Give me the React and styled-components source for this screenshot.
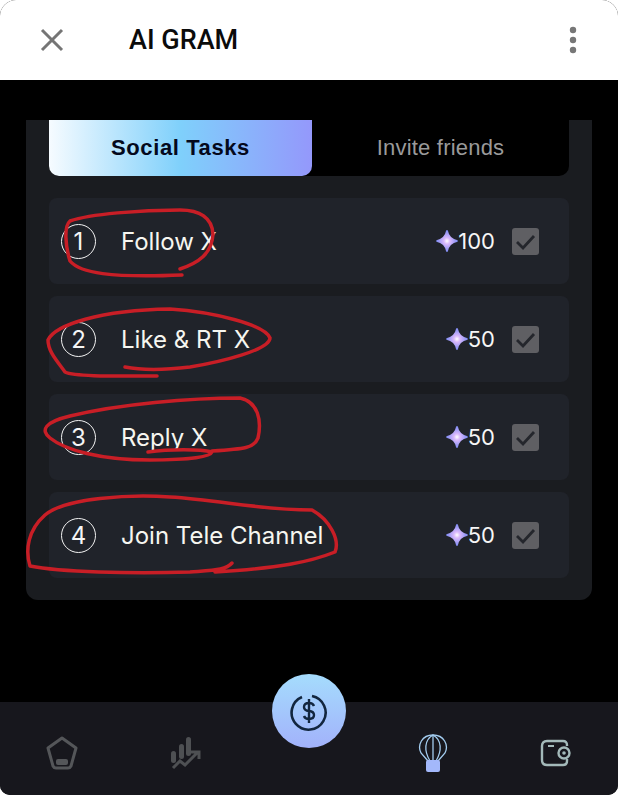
import React from 'react'
import styled, { createGlobalStyle } from 'styled-components'

const Global = createGlobalStyle`
  html, body { margin: 0; padding: 0; background: #ffffff; }
  * { box-sizing: border-box; }
`

const Shell = styled.div`
  position: relative;
  width: 618px;
  height: 795px;
  display: flex;
  flex-direction: column;
  background: #000;
  border-radius: 16px 16px 10px 10px;
  overflow: hidden;
  font-family: Inter, "Liberation Sans", sans-serif;
`

const TopBar = styled.header`
  height: 80px;
  flex: none;
  display: flex;
  align-items: center;
  padding: 0 40px;
  background: #fff;
`

const BarIcon = styled.svg`
  display: block;
  flex: none;
`

const Title = styled.h1`
  margin: 0 0 0 65px;
  flex: 1;
  font: 500 27px Roboto, "Liberation Sans", sans-serif;
  color: #0b0b0b;
`

const Body = styled.main`
  flex: 1;
  padding: 40px 26px 0 26px;
`

const Panel = styled.section`
  height: 480px;
  padding: 0 23px;
  background: #1a1c20;
  border-radius: 0 0 12px 12px;
`

const Tabs = styled.div`
  height: 56px;
  display: grid;
  grid-template-columns: 263px 1fr;
  background: #000;
  border-radius: 0 0 10px 10px;
  margin-bottom: 22px;
`

const Tab = styled.div`
  display: flex;
  align-items: center;
  justify-content: center;
  font: ${p => (p.$active ? 700 : 400)} 22px "Liberation Sans", sans-serif;
  letter-spacing: ${p => (p.$active ? '0.6px' : '0.2px')};
  color: ${p => (p.$active ? '#04091c' : '#9a9a9a')};
  border-radius: 0 0 10px 10px;
  background: ${p => (p.$active ? 'linear-gradient(90deg, #f6fbff 0%, #7fd0fb 50%, #9498fb 100%)' : 'transparent')};
`

const TaskList = styled.ul`
  list-style: none;
  margin: 0;
  padding: 0;
  display: flex;
  flex-direction: column;
  gap: 12px;
`

const Row = styled.li`
  height: 86px;
  display: flex;
  align-items: center;
  padding: 0 30px 0 12px;
  background: #20232a;
  border-radius: 8px;
`

const Num = styled.span`
  width: 35px;
  height: 35px;
  flex: none;
  display: flex;
  align-items: center;
  justify-content: center;
  border: 1px solid #f2f2f2;
  border-radius: 50%;
  color: #f5f5f5;
  font-size: 24px;
`

const Label = styled.span`
  flex: 1;
  margin-left: 25px;
  color: #f6f6f0;
  font-size: 24px;
`

const Points = styled.span`
  display: flex;
  align-items: center;
  color: #f6f6f6;
  font-size: 22px;
  margin-right: 17px;
`

const Check = styled.span`
  width: 27px;
  height: 27px;
  display: flex;
  align-items: center;
  justify-content: center;
  background: #5f5f63;
  border-radius: 3px;
`

const Nav = styled.nav`
  position: relative;
  height: 93px;
  flex: none;
  display: grid;
  grid-template-columns: repeat(5, 1fr);
  align-items: center;
  justify-items: center;
  padding: 8px 0 0 0;
  background: #17171d;
`

const CoinButton = styled.div`
  position: absolute;
  left: 272px;
  top: -28px;
  width: 74px;
  height: 74px;
  display: flex;
  align-items: center;
  justify-content: center;
  border-radius: 50%;
  background: linear-gradient(180deg, #a5dcfd 0%, #a2b2fb 100%);
`

const Scribbles = styled.svg`
  position: absolute;
  left: 0;
  top: 0;
  width: 618px;
  height: 795px;
  pointer-events: none;
`

const tasks = [
  { n: 1, label: 'Follow X', pts: 100 },
  { n: 2, label: 'Like & RT X', pts: 50 },
  { n: 3, label: 'Reply X', pts: 50 },
  { n: 4, label: 'Join Tele Channel', pts: 50 },
]

const Star = () => (
  <BarIcon width="22" height="22" viewBox="0 0 22 22">
    <defs>
      <radialGradient id="st" cx="50%" cy="50%" r="50%">
        <stop offset="0" stopColor="#fff" />
        <stop offset="0.3" stopColor="#d9b8fb" />
        <stop offset="1" stopColor="#7f8cf5" />
      </radialGradient>
    </defs>
    <path d="M11 0.5 C12 6 16 10 21.5 11 C16 12 12 16 11 21.5 C10 16 6 12 0.5 11 C6 10 10 6 11 0.5Z" fill="url(#st)" stroke="url(#st)" strokeWidth="1.6" />
  </BarIcon>
)

export default function App() {
  return (
    <>
      <Global />
      <Shell>
        <TopBar>
          <BarIcon width="24" height="24" viewBox="0 0 24 24">
            <path d="M2 2 L22 22 M22 2 L2 22" stroke="#757575" strokeWidth="3" />
          </BarIcon>
          <Title>AI GRAM</Title>
          <BarIcon width="10" height="28" viewBox="0 0 10 28">
            <circle cx="5" cy="4" r="3.2" fill="#777" />
            <circle cx="5" cy="14" r="3.2" fill="#777" />
            <circle cx="5" cy="24" r="3.2" fill="#777" />
          </BarIcon>
        </TopBar>
        <Body>
          <Panel>
            <Tabs>
              <Tab $active>Social Tasks</Tab>
              <Tab>Invite friends</Tab>
            </Tabs>
            <TaskList>
              {tasks.map(t => (
                <Row key={t.n}>
                  <Num>{t.n}</Num>
                  <Label>{t.label}</Label>
                  <Points><Star />{t.pts}</Points>
                  <Check>
                    <BarIcon width="21" height="17" viewBox="0 0 21 17">
                      <path d="M2 9 L8 15 L19 3" fill="none" stroke="#24262c" strokeWidth="2.8" />
                    </BarIcon>
                  </Check>
                </Row>
              ))}
            </TaskList>
          </Panel>
        </Body>
        <Nav>
          <BarIcon width="32" height="34" viewBox="0 0 32 34">
            <path d="M16 2 L30 12 L25 30 Q24 32 22 32 L10 32 Q8 32 7 30 L2 12 Z" fill="none" stroke="#545659" strokeWidth="3" strokeLinejoin="round" />
            <rect x="10" y="23" width="12" height="6" rx="2" fill="#545659" />
          </BarIcon>
          <BarIcon width="32" height="34" viewBox="0 0 32 34">
            <g fill="#4e5053">
              <rect x="2" y="15" width="5" height="12" rx="2.5" />
              <rect x="10" y="8" width="5" height="15" rx="2.5" />
              <rect x="17" y="1" width="5" height="19" rx="2.5" />
            </g>
            <path d="M4 32 L11 25 L16 29 L28 17 M22 16 H30 V23" fill="none" stroke="#4e5053" strokeWidth="3" />
          </BarIcon>
          <span />
          <BarIcon width="30" height="40" viewBox="0 0 30 40">
            <g fill="none" stroke="#a3cdf0" strokeWidth="1.3">
              <path d="M10 28 L3 20 C-1 12 4 2 15 2 C26 2 31 12 27 20 L20 28" />
              <path d="M12 28 C6 18 6 7 15 2 C24 7 24 18 18 28" />
              <path d="M15 2 V28" />
            </g>
            <rect x="8" y="27" width="14" height="12" rx="2" fill="#a3b8fb" />
          </BarIcon>
          <BarIcon width="32" height="28" viewBox="0 0 32 28">
            <path d="M27 7 V6 Q27 2 23 2 H7 Q2 2 2 7 V21 Q2 26 7 26 H23 Q27 26 27 22 V20" fill="none" stroke="#a3b9b9" strokeWidth="2.4" />
            <path d="M8 7 H14" stroke="#a3b9b9" strokeWidth="2" />
            <circle cx="24" cy="14" r="5.5" fill="none" stroke="#a3b9b9" strokeWidth="2.4" />
            <circle cx="24" cy="14" r="1.8" fill="#a3b9b9" />
          </BarIcon>
          <CoinButton>
            <BarIcon width="38" height="44" viewBox="0 0 38 44">
              <path d="M22 4 A17 17 0 1 1 12 5" transform="translate(0 3)" fill="none" stroke="#12263f" strokeWidth="2.6" />
              <path d="M24 17 Q23 14 19 14 Q14 14 14 18 Q14 21.5 19 22 Q24 22.5 24 26 Q24 30 19 30 Q15 30 14 27 M19 10 V34" fill="none" stroke="#12263f" strokeWidth="2.4" />
            </BarIcon>
          </CoinButton>
        </Nav>
        <Scribbles viewBox="0 0 618 795" fill="none" stroke="#c81e26" strokeWidth="3.5" strokeLinecap="round" strokeLinejoin="round">
          <path d="M180 269 C198 263 212 254 213 234 C212 218 200 210 180 210 C140 210 90 214 70 221 C64 226 65 245 70 261 C80 273 110 278 182 275" />
          <path d="M157 376 C120 376 75 377 65 372 C58 362 48 352 48 340 C55 325 100 310 170 309 C215 312 265 325 270 338 C270 350 220 362 190 367 C165 370 140 370 125 367" />
          <path d="M148 452 C170 449 200 449 212 452 C210 458 180 460 150 460 C100 460 65 450 50 438 C40 430 45 422 70 416 C120 404 190 398 240 398 C258 402 262 420 258 438 C254 448 245 449 212 451" />
          <path d="M232 563 C226 570 215 570 190 572 C130 574 60 572 30 566 C25 550 28 530 45 515 C65 498 130 494 170 497 C220 500 260 510 312 510 C330 520 340 540 335 552 C310 562 280 568 215 572" />
        </Scribbles>
      </Shell>
    </>
  )
}
